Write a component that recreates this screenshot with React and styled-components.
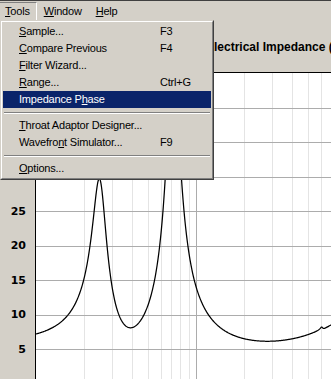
import React, { useMemo } from 'react';
import styled, { createGlobalStyle, css } from 'styled-components';

const GlobalStyle = createGlobalStyle`
  html, body { margin: 0; padding: 0; background: #d4d0c8; overflow: hidden; }
  #root { width: 331px; height: 379px; }
`;

const Window = styled.div`
  position: relative;
  width: 331px;
  height: 379px;
  overflow: hidden;
  display: flex;
  flex-direction: column;
  background: #d4d0c8;
  font-family: "Liberation Sans", Arial, sans-serif;
  font-size: 11px;
  color: #000;
`;

const MenuBar = styled.div`
  flex: none;
  display: flex;
  border-top: 1px solid #404040;
  padding-top: 1px;
  height: 19px;
`;

const MenuTitle = styled.div`
  box-sizing: border-box;
  height: 19px;
  padding: 0 6px;
  line-height: 17px;
  letter-spacing: -0.2px;
  border: 1px solid transparent;
  &:first-child { margin-left: -2px; }
  ${p => p.$open && css`border-color: #808080 #ffffff #ffffff #808080;`}
`;

const Mn = styled.span`
  text-decoration: underline;
  text-underline-offset: 1px;
`;

const Popup = styled.div`
  position: absolute;
  top: 20px;
  left: 0;
  width: 214px;
  box-sizing: border-box;
  border: 1px solid;
  border-color: #d4d0c8 #404040 #404040 #d4d0c8;
  background: #d4d0c8;
  z-index: 2;
`;

const PopupInner = styled.div`
  border: 1px solid;
  border-color: #ffffff #808080 #808080 #ffffff;
  padding: 1px;
`;

const Item = styled.div`
  display: grid;
  grid-template-columns: 141px 1fr;
  padding-left: 16px;
  height: 17px;
  line-height: 17px;
  white-space: nowrap;
  letter-spacing: -0.2px;
  background: ${p => (p.$active ? '#0a246a' : 'transparent')};
  color: ${p => (p.$active ? '#ffffff' : '#000000')};
`;

const Separator = styled.div`
  box-sizing: border-box;
  height: 9px;
  padding: 4px 1px 0;
  &::before {
    content: '';
    display: block;
    border-top: 1px solid #808080;
    border-bottom: 1px solid #ffffff;
  }
`;

const ChartHeader = styled.div`
  flex: none;
  height: 51px;
  display: flex;
  align-items: center;
  padding-left: 206px;
  white-space: nowrap;
  overflow: hidden;
`;

const ChartTitle = styled.div`
  font-weight: bold;
  font-size: 12px;
`;

const ChartBody = styled.div`
  flex: 1;
  display: flex;
  min-height: 0;
`;

const Axis = styled.div`
  flex: none;
  width: 35px;
  padding-top: 121.75px;
  display: flex;
  flex-direction: column;
`;

const AxisLabel = styled.div`
  height: 34.5px;
  display: flex;
  align-items: center;
  justify-content: flex-end;
  padding-right: 9px;
  font-family: "DejaVu Sans", Verdana, sans-serif;
  font-weight: bold;
  font-size: 11px;
`;

const Plot = styled.div`
  flex: 1;
  border-top: 1px solid #000;
  border-left: 1px solid #000;
  background: #fff;
  overflow: hidden;
  svg { display: block; }
`;

const W = 295;
const H = 306;
const DEC = 160;
const F0 = 10;
const yOf = z => 310.5 - 6.9 * z;

const params = {
  Re: 6.0,
  Le: 0.0016,
  peaks: [
    { f: 25.1, R: 23.2, Q: 4.7 },
    { f: 71.8, R: 42, Q: 5.5 },
    { f: 613, R: 0.4, Q: 25 },
  ],
};

function impedance(f) {
  let re = params.Re;
  let im = 2 * Math.PI * f * params.Le;
  for (const p of params.peaks) {
    const u = f / p.f;
    const q = p.Q * (u - 1 / u);
    const d = 1 + q * q;
    re += p.R / d;
    im -= (p.R * q) / d;
  }
  return Math.sqrt(re * re + im * im);
}

function Chart() {
  const curve = useMemo(() => {
    const pts = [];
    for (let x = 0; x <= W; x += 0.5) {
      const f = F0 * Math.pow(10, x / DEC);
      const y = yOf(impedance(f));
      pts.push(`${x.toFixed(1)},${Math.max(-50, y).toFixed(2)}`);
    }
    return pts.join(' ');
  }, []);

  const vMinor = [];
  for (let d = 0; d < 2; d++) {
    for (let m = 2; m <= 9; m++) {
      const x = DEC * (d + Math.log10(m));
      if (x < W) vMinor.push(Math.round(x) + 0.5);
    }
  }
  const vMajor = [DEC + 0.5];
  const hLines = [];
  for (let z = 5; z <= 40; z += 5) hLines.push(Math.round(yOf(z)) + 0.5);

  return (
    <svg width={W} height={H} viewBox={`0 0 ${W} ${H}`}>
      {vMinor.map(x => (
        <line key={`v${x}`} x1={x} x2={x} y1={0} y2={H} stroke="#e4e4e4" strokeWidth="1" shapeRendering="crispEdges" />
      ))}
      {vMajor.map(x => (
        <line key={`V${x}`} x1={x} x2={x} y1={0} y2={H} stroke="#acacac" strokeWidth="1" shapeRendering="crispEdges" />
      ))}
      {hLines.map(y => (
        <line key={`h${y}`} x1={0} x2={W} y1={y} y2={y} stroke="#acacac" strokeWidth="1" shapeRendering="crispEdges" />
      ))}
      <polyline points={curve} fill="none" stroke="#000" strokeWidth="1.25" strokeLinejoin="round" />
    </svg>
  );
}

const menuItems = [
  { label: 'Sample...', u: 0, key: 'F3' },
  { label: 'Compare Previous', u: 0, key: 'F4' },
  { label: 'Filter Wizard...', u: 0 },
  { label: 'Range...', u: 0, key: 'Ctrl+G' },
  { label: 'Impedance Phase', u: 11, active: true },
  { sep: true },
  { label: 'Throat Adaptor Designer...', u: 0 },
  { label: 'Wavefront Simulator...', u: 7, key: 'F9' },
  { sep: true },
  { label: 'Options...', u: 0 },
];

function Label({ text, u }) {
  return (
    <span>
      {text.slice(0, u)}
      <Mn>{text[u]}</Mn>
      {text.slice(u + 1)}
    </span>
  );
}

export default function App() {
  return (
    <>
      <GlobalStyle />
      <Window>
        <MenuBar>
          <MenuTitle $open><Label text="Tools" u={0} /></MenuTitle>
          <MenuTitle><Label text="Window" u={0} /></MenuTitle>
          <MenuTitle><Label text="Help" u={0} /></MenuTitle>
        </MenuBar>
        <ChartHeader>
          <ChartTitle>Electrical Impedance (Ohms)</ChartTitle>
        </ChartHeader>
        <ChartBody>
          <Axis>
            {[25, 20, 15, 10, 5].map(v => (
              <AxisLabel key={v}>{v}</AxisLabel>
            ))}
          </Axis>
          <Plot>
            <Chart />
          </Plot>
        </ChartBody>
        <Popup>
          <PopupInner>
            {menuItems.map((it, i) =>
              it.sep ? (
                <Separator key={i} />
              ) : (
                <Item key={i} $active={it.active}>
                  <Label text={it.label} u={it.u} />
                  <span>{it.key || ''}</span>
                </Item>
              )
            )}
          </PopupInner>
        </Popup>
      </Window>
    </>
  );
}
